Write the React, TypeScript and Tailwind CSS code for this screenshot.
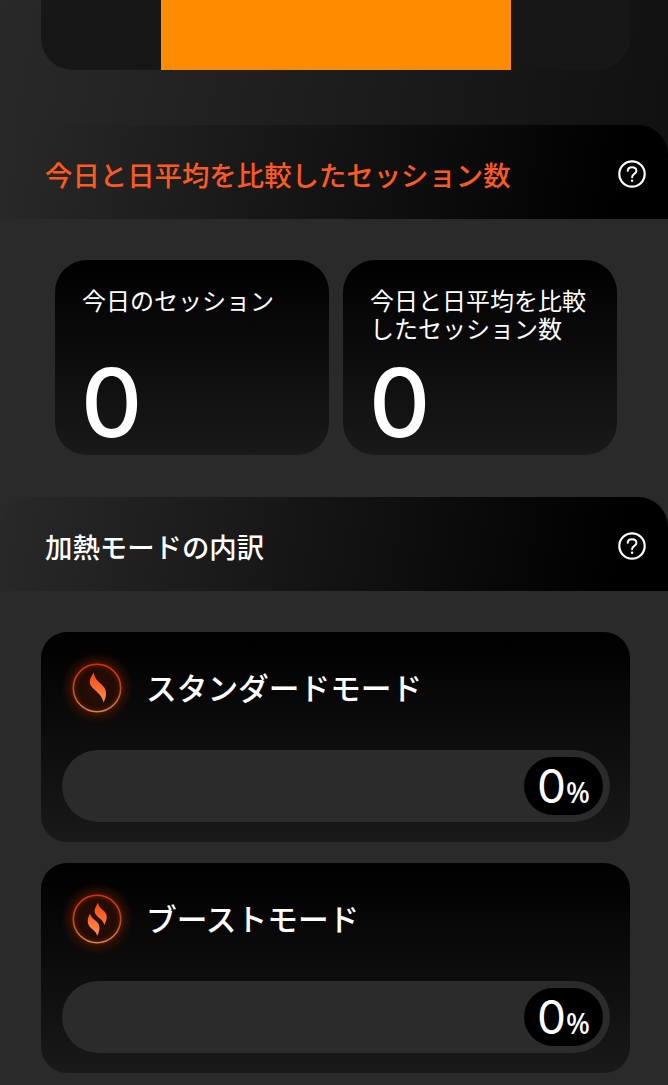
import React, { useId } from 'react';

type SectionHeaderProps = {
  title: string;
  accent?: boolean;
};

type SessionCardProps = {
  label: string;
  value: number;
};

type ModeCardProps = {
  name: string;
  percent: number;
  boost?: boolean;
};

function HelpIcon() {
  return (
    <svg width="28" height="28" viewBox="0 0 28 28" fill="none" stroke="#fff" strokeLinecap="round">
      <circle cx="14" cy="14" r="12.7" strokeWidth="2.2" />
      <path d="M9.7 10.8C9.9 8.6 11.6 7.3 14 7.3c2.5 0 4.4 1.4 4.4 3.6 0 3.1-4.3 2.9-4.3 6.3" strokeWidth="2" />
      <circle cx="14.1" cy="20.8" r="1.3" fill="#fff" stroke="none" />
    </svg>
  );
}

function SectionHeader({ title, accent }: SectionHeaderProps) {
  return (
    <div className="flex h-[94px] items-center justify-between rounded-t-[30px] bg-[linear-gradient(100deg,#292929_0%,#131313_50%,#000_92%)] pl-[45px] pr-[22px]">
      <h2
        className={`mt-[6px] whitespace-nowrap text-[27.4px] font-medium leading-none ${
          accent ? 'text-[#fc5a22]' : 'text-white'
        }`}
      >
        {title}
      </h2>
      <button className="mt-[4px]" aria-label="ヘルプ">
        <HelpIcon />
      </button>
    </div>
  );
}

function SessionCard({ label, value }: SessionCardProps) {
  return (
    <div className="flex h-[195px] w-[274px] flex-col justify-between rounded-[32px] bg-[linear-gradient(180deg,#000,#191919)] pl-7 pt-[26px] text-white">
      <p className="-ml-px w-[222px] text-[24px] leading-[27.5px]">{label}</p>
      <p className="-ml-[2px] mb-[4px] font-['Inter'] text-[95px] font-medium leading-[96px]">{value}</p>
    </div>
  );
}

// Glowing ring with one flame, or two for the boost mode
function FlameIcon({ boost }: { boost?: boolean }) {
  const id = useId();
  return (
    <svg width="80" height="80" viewBox="0 0 80 80" fill="none">
      <defs>
        <linearGradient id={`${id}ring`} x1="40" y1="15" x2="40" y2="65" gradientUnits="userSpaceOnUse">
          <stop stopColor="#d92e05" />
          <stop offset="0.5" stopColor="#b9481a" />
          <stop offset="1" stopColor="#cf8853" />
        </linearGradient>
        <linearGradient id={`${id}flame`} x1="40" y1="25" x2="40" y2="56" gradientUnits="userSpaceOnUse">
          <stop stopColor="#f84a10" />
          <stop offset="1" stopColor="#ff8f52" />
        </linearGradient>
        <radialGradient id={`${id}glow`} cx="40" cy="40" r="36" gradientUnits="userSpaceOnUse">
          <stop stopColor="#2a1008" />
          <stop offset="0.5" stopColor="#220b03" />
          <stop offset="0.67" stopColor="#491500" />
          <stop offset="0.78" stopColor="#381000" stopOpacity="0.6" />
          <stop offset="1" stopColor="#381000" stopOpacity="0" />
        </radialGradient>
      </defs>
      <circle cx="40" cy="40" r="36" fill={`url(#${id}glow)`} />
      <circle cx="40" cy="40" r="23.7" stroke={`url(#${id}ring)`} strokeWidth="1.6" />
      {boost ? (
        <g fill={`url(#${id}flame)`}>
          <path d="M41 23.5C38.5 28 36.5 31.5 38.5 35c1.9 3.7 7.8 5.5 8.8 11 2.2-4.2 3.4-8 1.5-11.7C46.5 30.7 41.5 29 41 23.5Z" />
          <path d="M33 34.5c-2.1 4-3.1 8-1.4 11.5 2 4 7.7 5.6 8.6 11 2.1-4.4 3.2-8.6 1.2-12.3C39.3 41.2 34 39.8 33 34.5Z" />
        </g>
      ) : (
        <path
          d="M36.7 24.5c-2.9 4.4-5.1 8.8-3.1 12.8C36 41.8 44.6 45.4 46.6 54.5c2.5-5 3.5-10.2 1-14.5C44.5 35 37.2 32 36.7 24.5Z"
          fill={`url(#${id}flame)`}
        />
      )}
    </svg>
  );
}

function ModeCard({ name, percent, boost }: ModeCardProps) {
  return (
    <div className="h-[210px] rounded-[26px] bg-[linear-gradient(180deg,#000,#191919)] px-[21px] pt-4 text-white">
      <div className="-ml-[5px] flex h-20 items-center">
        <FlameIcon boost={boost} />
        <h3 className="-mt-px ml-[9px] whitespace-nowrap text-[30.7px] font-medium leading-none">{name}</h3>
      </div>
      <div className="-mr-px mt-[22px] flex h-[72px] items-center justify-end rounded-full bg-[#2b2b2b] pr-[7px]">
        <div className="flex h-[58px] w-[79px] items-baseline justify-center rounded-full bg-black leading-[58px]">
          <span className="font-['Inter'] text-[46px]">{percent}</span>
          <span className="font-['Noto_Sans'] text-[28px] font-medium">%</span>
        </div>
      </div>
    </div>
  );
}

export default function App() {
  return (
    <main className="h-[1085px] w-[668px] overflow-hidden bg-[#2a2a2a] font-['Noto_Sans_CJK_JP',sans-serif]">
      <section className="bg-[linear-gradient(100deg,#292929_0%,#101010_100%)]">
        <div className="h-[125px] pl-[41px]">
          <div className="flex h-[70px] w-[589px] justify-center rounded-b-[32px] bg-[#171717]">
            <div className="h-full w-[350px] bg-[#ff8c00]" />
          </div>
        </div>
        <SectionHeader title="今日と日平均を比較したセッション数" accent />
      </section>

      <div className="flex gap-[14px] pb-[42px] pl-[55px] pt-[41px]">
        <SessionCard label="今日のセッション" value={0} />
        <SessionCard label="今日と日平均を比較したセッション数" value={0} />
      </div>

      <SectionHeader title="加熱モードの内訳" />
      <div className="flex flex-col gap-[21px] pl-[41px] pr-[38px] pt-[41px]">
        <ModeCard name="スタンダードモード" percent={0} />
        <ModeCard name="ブーストモード" percent={0} boost />
      </div>
    </main>
  );
}
